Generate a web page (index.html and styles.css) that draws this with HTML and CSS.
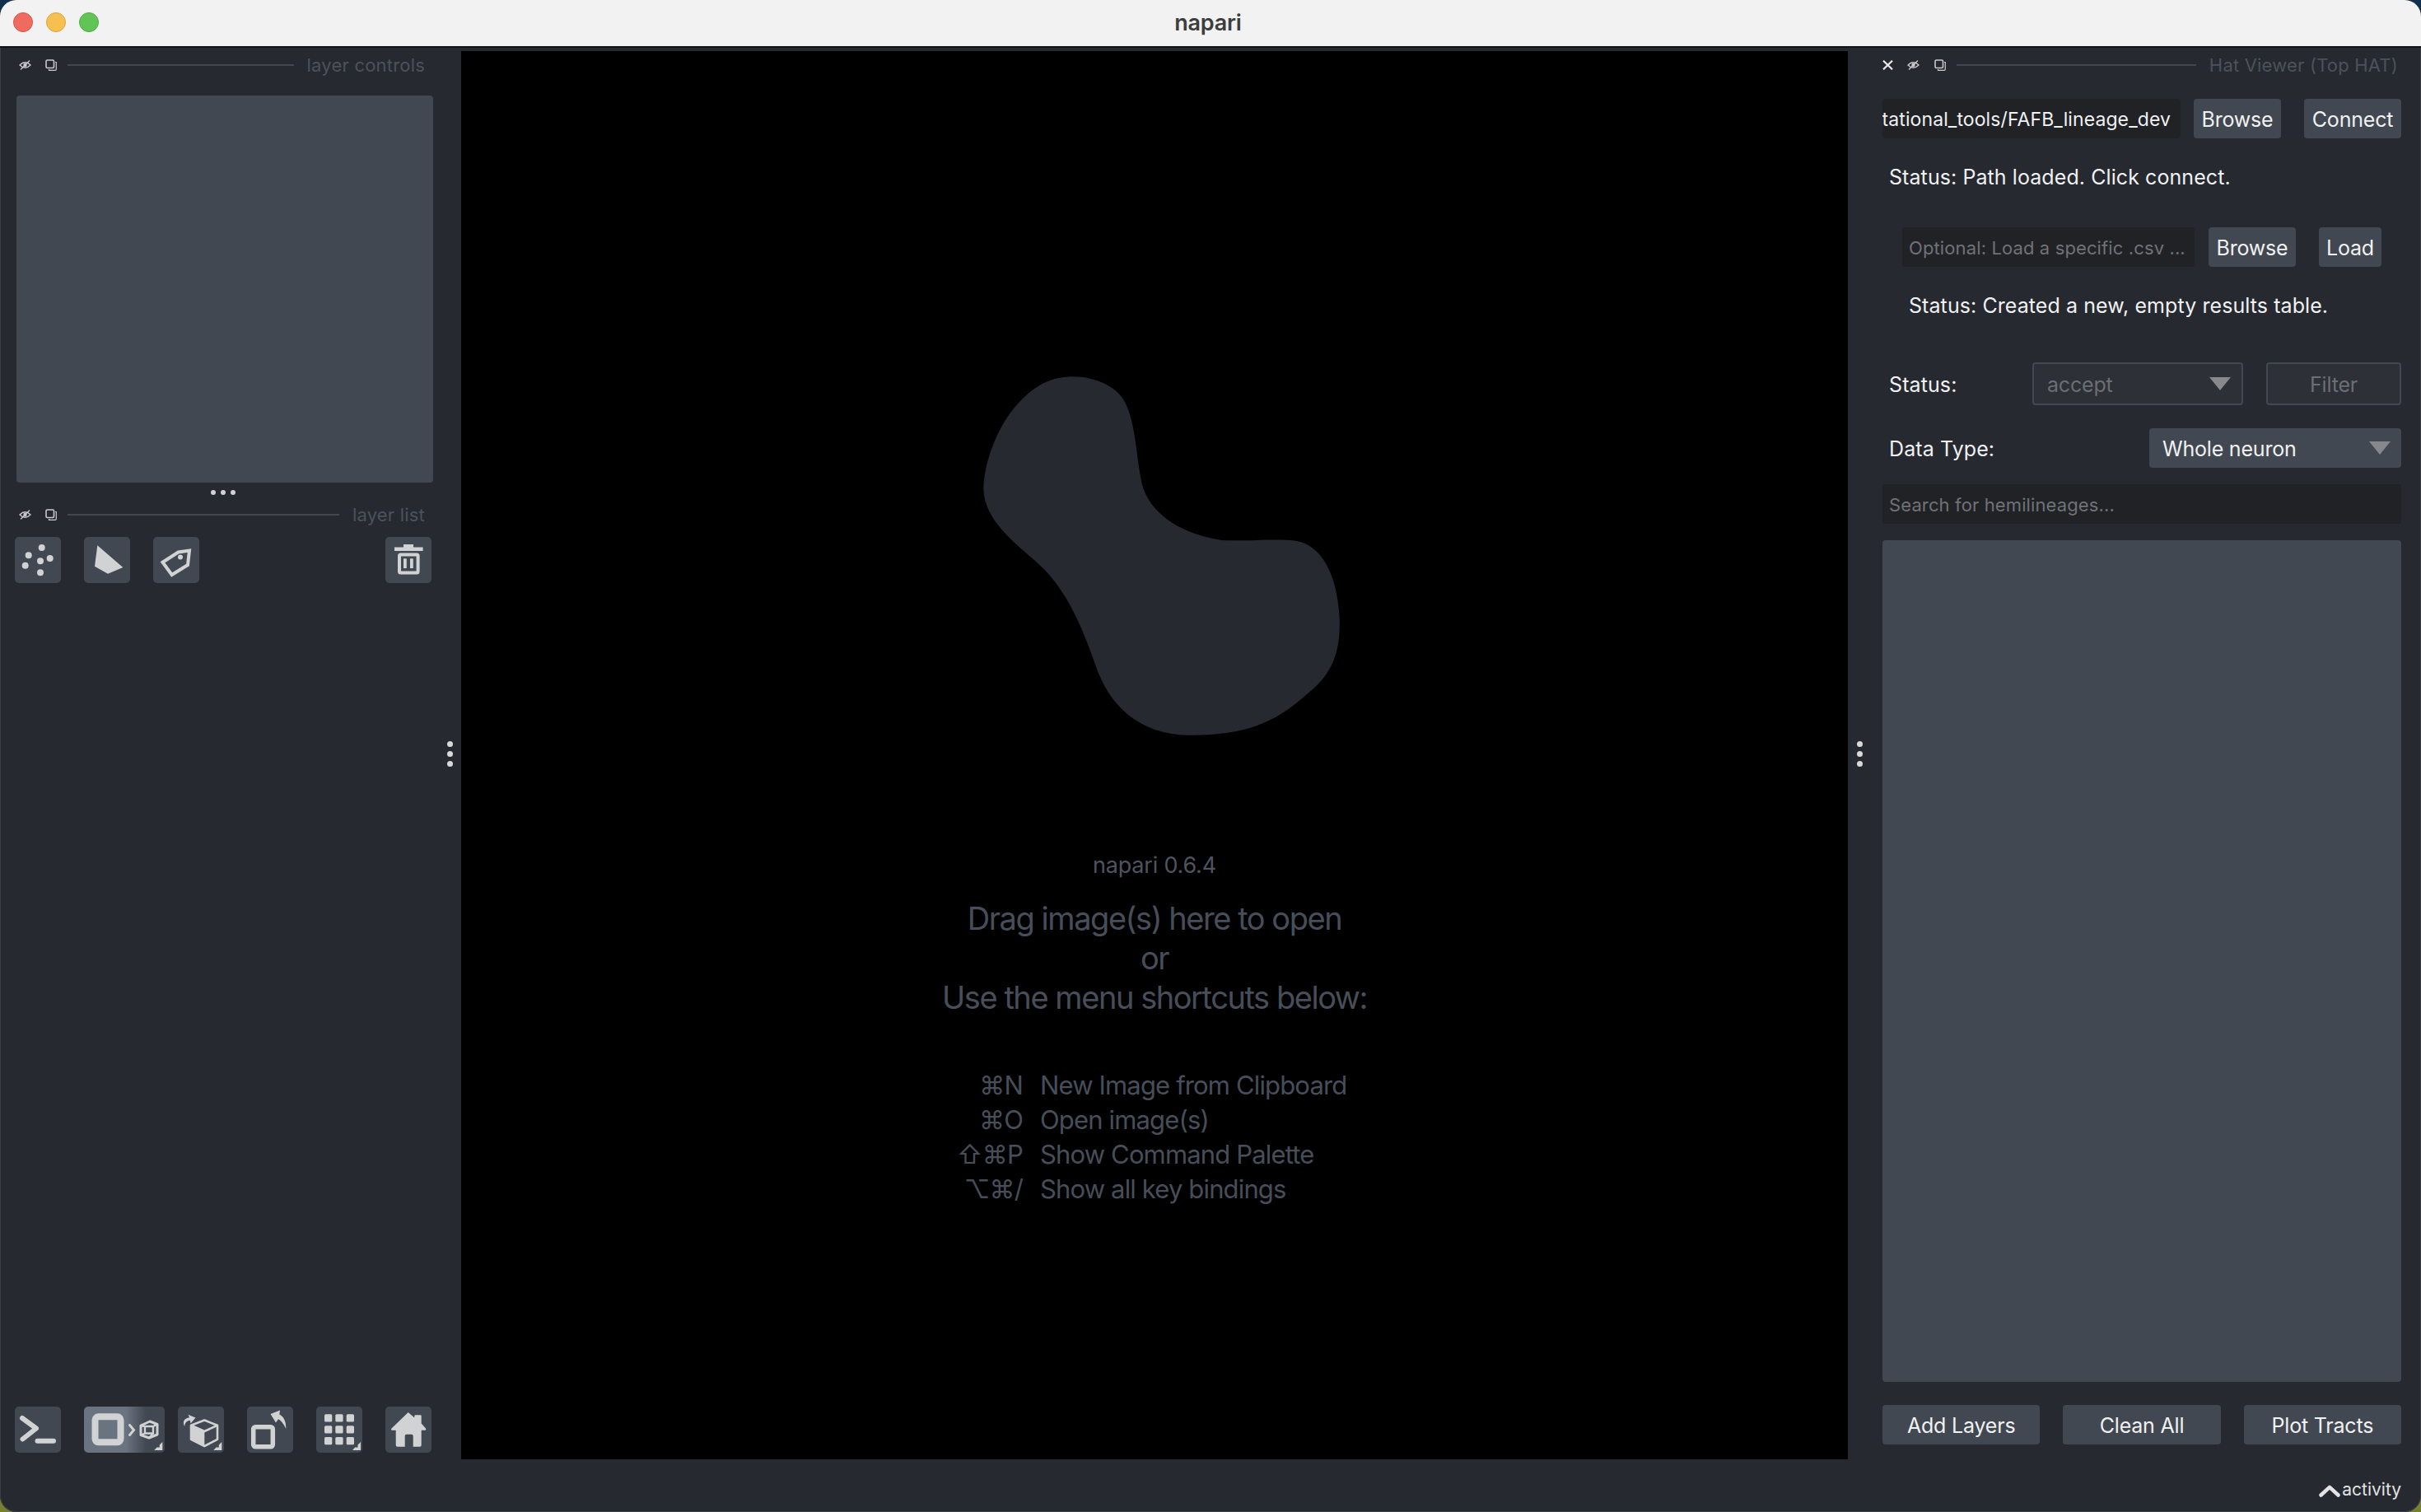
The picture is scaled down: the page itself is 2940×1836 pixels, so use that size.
FILE: index.html

```html
<!DOCTYPE html>
<html lang="en">
<head>
    <meta charset="UTF-8">
    <meta name="viewport" content="width=device-width, initial-scale=1.0">
    <title>napari</title>
    <link rel="stylesheet" href="styles.css">
</head>
<body>

<svg class="icon-defs" width="0" height="0">
    <symbol id="eye" viewBox="0 0 15 12">
        <path d="M1 6 Q7.5 -.5 14 6 Q7.5 12.5 1 6 Z" fill="none" stroke="currentColor" stroke-width="1.3"/>
        <circle cx="7.5" cy="6" r="2.2" fill="currentColor"/>
        <path d="M2 11.5 L13 .5" stroke="currentColor" stroke-width="1.3"/>
    </symbol>
    <symbol id="float" viewBox="0 0 14 14">
        <rect x="1" y="1" width="9.5" height="9.5" rx="1.5" fill="none" stroke="currentColor" stroke-width="1.6"/>
        <path d="M12 3.5 H13.3 V12 a1.3 1.3 0 0 1 -1.3 1.3 H4.5 V12" fill="none" stroke="currentColor" stroke-width="1.2"/>
    </symbol>
</svg>

<div class="window">
    <header class="titlebar">
        <div class="lights">
            <span class="light light-red"></span>
            <span class="light light-yellow"></span>
            <span class="light light-green"></span>
        </div>
        <span class="window-title">napari</span>
    </header>

    <div class="main">
        <!-- Left dock -->
        <aside class="left-dock">
            <div class="dock-title">
                <svg class="eye-icon"><use href="#eye"/></svg>
                <svg class="float-icon"><use href="#float"/></svg>
                <span class="dock-line"></span>
                <span class="dock-name">layer controls</span>
            </div>
            <div class="layer-controls"></div>
            <div class="splitter-dots"><span></span><span></span><span></span></div>
            <div class="dock-title list-title">
                <svg class="eye-icon"><use href="#eye"/></svg>
                <svg class="float-icon"><use href="#float"/></svg>
                <span class="dock-line"></span>
                <span class="dock-name">layer list</span>
            </div>
            <div class="tool-row layer-tools">
                <button class="tool-btn" aria-label="New points layer">
                    <svg viewBox="0 0 56 56">
                        <circle cx="32.7" cy="13" r="4"/><circle cx="16.7" cy="22.3" r="4"/>
                        <circle cx="42.7" cy="26" r="4"/><circle cx="31" cy="29.3" r="4"/>
                        <circle cx="12.7" cy="34.7" r="4"/><circle cx="31" cy="43.3" r="4"/>
                    </svg>
                </button>
                <button class="tool-btn" aria-label="New shapes layer">
                    <svg viewBox="0 0 56 56"><path d="M16.3 10.3 L47.3 37 L29 44.7 L13 35.7 Z"/></svg>
                </button>
                <button class="tool-btn" aria-label="New labels layer">
                    <svg viewBox="0 0 56 56">
                        <path class="line" d="M11.5 30.8 L30.5 18.5 L44 16.5 L42 34 L22.7 46 Z" stroke-width="4"/>
                        <circle cx="33" cy="24.5" r="3"/>
                    </svg>
                </button>
                <button class="tool-btn tool-end" aria-label="Delete layer">
                    <svg viewBox="0 0 56 56">
                        <path d="M22 9 H34 V12.5 H45.6 V17 H11 V12.5 H22 Z"/>
                        <rect class="line" x="17" y="21.5" width="22.6" height="22" rx="1.5" stroke-width="4"/>
                        <rect x="22" y="26.3" width="3.8" height="11.7"/><rect x="30" y="26.3" width="3.8" height="11.7"/>
                    </svg>
                </button>
            </div>
            <div class="dock-spacer"></div>
            <div class="tool-row viewer-tools">
                <button class="tool-btn" aria-label="Toggle console">
                    <svg viewBox="0 0 56 56">
                        <path class="line" d="M9 14 L26 26.5 L9.5 39.5" stroke-width="6" stroke-linecap="round" stroke-linejoin="round"/>
                        <path class="line" d="M27.5 41.7 H47" stroke-width="6" stroke-linecap="round"/>
                    </svg>
                </button>
                <button class="tool-btn tool-wide" aria-label="Toggle 2D/3D">
                    <svg viewBox="0 0 98 56">
                        <rect class="line" x="13.5" y="12.3" width="31" height="31" rx="4" stroke-width="8"/>
                        <path class="line" d="M55.5 22.5 L60.5 28.5 L55.5 34.5" stroke-width="3" stroke-linecap="round"/>
                        <path class="line" d="M80 18 L89 21.5 V34 L79 38 L69 34.5 V23 Z" stroke-width="3" stroke-linejoin="round"/>
                        <path class="line" d="M74 24 H84 V32.5 H74 Z M69 23 L74 24 M89 21.5 L84 24 M79 38 L84 32.5 M69 34.5 L74 32.5" stroke-width="2.4"/>
                        <path d="M95.3 43 V53 H85.3 L88.5 49.5 H91.8 V46.5 Z"/>
                    </svg>
                </button>
                <button class="tool-btn" aria-label="Change camera">
                    <svg viewBox="0 0 56 56">
                        <path d="M8.2 24 C5 18 8 14 14 13.2 L12.5 9.8 L21.5 13.5 L15.5 20.5 L14.8 16.8 C10.5 17.5 8.5 20 8.2 24 Z"/>
                        <path class="line" d="M32.3 16.5 L48 22.8 V39.8 L32.3 48 L16 39.8 V22.8 Z" stroke-width="2.6" stroke-linejoin="round"/>
                        <path d="M15 23 L32.3 30 V48.5 L15 40 Z"/>
                        <path class="line" d="M16 22.8 L32.3 30 L48 22.8" stroke-width="2.6"/>
                        <path d="M53.3 43 V53 H43.3 L46.5 49.5 H49.8 V46.5 Z"/>
                    </svg>
                </button>
                <button class="tool-btn" aria-label="Roll view">
                    <svg viewBox="0 0 56 56">
                        <rect class="line" x="7.7" y="24.7" width="23.6" height="24" rx="2.5" stroke-width="5.5"/>
                        <path d="M28.5 9 L40 4.5 L39.3 9.5 C45 12 47.5 19 47.3 27 C44.5 20.5 41 16.8 38 15.2 L35 19.5 Z"/>
                    </svg>
                </button>
                <button class="tool-btn" aria-label="Toggle grid">
                    <svg viewBox="0 0 56 56">
                        <rect x="10" y="9.3" width="9.3" height="9.3" rx="1.5"/><rect x="23.3" y="9.3" width="9.3" height="9.3" rx="1.5"/><rect x="36.7" y="9.3" width="9.3" height="9.3" rx="1.5"/>
                        <rect x="10" y="23.3" width="9.3" height="9.3" rx="1.5"/><rect x="23.3" y="23.3" width="9.3" height="9.3" rx="1.5"/><rect x="36.7" y="23.3" width="9.3" height="9.3" rx="1.5"/>
                        <rect x="10" y="37" width="9.3" height="9.3" rx="1.5"/><rect x="23.3" y="37" width="9.3" height="9.3" rx="1.5"/><rect x="36.7" y="37" width="9.3" height="9.3" rx="1.5"/>
                        <path d="M54 43 V53 H44 L47.2 49.5 H50.5 V46.5 Z"/>
                    </svg>
                </button>
                <button class="tool-btn" aria-label="Reset view">
                    <svg viewBox="0 0 56 56">
                        <path d="M27.7 7 L35.3 13.5 V11.5 Q35.3 10.3 36.5 10.3 H42.5 Q43.7 10.3 43.7 11.5 V20.5 L49 26.5 Q50 28.7 48 28.7 H43.7 V46.7 Q43.7 48.7 41.7 48.7 H33.7 V35.7 Q33.7 33.7 31.7 33.7 H25.7 Q23.7 33.7 23.7 35.7 V48.7 H14.7 Q12.7 48.7 12.7 46.7 V28.7 H8.5 Q6 28.7 7.5 26.5 Z"/>
                    </svg>
                </button>
            </div>
            <div class="handle"><span></span><span></span><span></span></div>
        </aside>

        <!-- Canvas welcome screen -->
        <main class="canvas">
            <svg class="logo" viewBox="0 0 1500 1440">
                <path d="M450 82 C540 80 630 120 655 190 C690 270 690 390 712 480 C740 570 830 650 1000 678 C1080 682 1200 672 1270 680 C1360 695 1420 790 1430 960 C1435 1090 1400 1170 1310 1240 C1200 1340 1090 1390 880 1388 C700 1385 590 1280 540 1130 C490 990 440 870 350 780 C280 710 135 620 133 490 C135 400 180 270 250 190 C310 120 370 85 450 82 Z"/>
            </svg>
            <div class="version">napari 0.6.4</div>
            <div class="drag-text">Drag image(s) here to open<br>or<br>Use the menu shortcuts below:</div>
            <div class="shortcuts">
                <span class="keys">⌘N</span><span>New Image from Clipboard</span>
                <span class="keys">⌘O</span><span>Open image(s)</span>
                <span class="keys">⇧⌘P</span><span>Show Command Palette</span>
                <span class="keys">⌥⌘/</span><span>Show all key bindings</span>
            </div>
        </main>

        <!-- Hat Viewer dock -->
        <aside class="right-dock">
            <div class="dock-title hat-title">
                <svg class="close-icon" viewBox="0 0 13 12"><path d="M1 .7 L12 11.3 M12 .7 L1 11.3" stroke="currentColor" stroke-width="2.2"/></svg>
                <svg class="eye-icon"><use href="#eye"/></svg>
                <svg class="float-icon"><use href="#float"/></svg>
                <span class="dock-line"></span>
                <span class="dock-name">Hat Viewer (Top HAT)</span>
            </div>

            <div class="path-row">
                <div class="path-input"><span>computational_tools/FAFB_lineage_dev</span></div>
                <button class="btn btn-browse">Browse</button>
                <button class="btn btn-connect">Connect</button>
            </div>
            <div class="status status-path">Status: Path loaded. Click connect.</div>

            <div class="csv-row">
                <input class="text-input csv-input" type="text" placeholder="Optional: Load a specific .csv ...">
                <button class="btn btn-browse">Browse</button>
                <button class="btn btn-load">Load</button>
            </div>
            <div class="status status-csv">Status: Created a new, empty results table.</div>

            <div class="filter-row">
                <label class="field-label status-label">Status:</label>
                <div class="combo combo-off">
                    <select disabled><option>accept</option></select>
                </div>
                <button class="btn btn-off" disabled>Filter</button>
            </div>
            <div class="type-row">
                <label class="field-label">Data Type:</label>
                <div class="combo combo-type">
                    <select><option>Whole neuron</option></select>
                </div>
            </div>

            <input class="text-input search-input" type="text" placeholder="Search for hemilineages...">
            <div class="results-list"></div>

            <div class="action-row">
                <button class="btn">Add Layers</button>
                <button class="btn">Clean All</button>
                <button class="btn">Plot Tracts</button>
            </div>
            <div class="activity">
                <svg viewBox="0 0 26 15"><path d="M2.5 12.5 L13 2.8 L23.5 12.5" fill="none" stroke="currentColor" stroke-width="4.5" stroke-linecap="round" stroke-linejoin="round"/></svg>
                <span>activity</span>
            </div>
            <div class="handle"><span></span><span></span><span></span></div>
        </aside>
    </div>
</div>

</body>
</html>
```

FILE: styles.css

```css
* { box-sizing: border-box; }
html, body { margin: 0; padding: 0; height: 100%; }
body { width: 2940px; height: 1836px; overflow: hidden; background: linear-gradient(#12304d 50%, #77802e 50%); font-family: "Inter", "DejaVu Sans", sans-serif; color: #f0f1f2; }
.icon-defs { display: block; height: 0; }

.window { width: 2940px; height: 1836px; display: flex; flex-direction: column; border-radius: 20px; overflow: hidden; background: #262930; box-shadow: inset 0 0 0 1px #3a3e45; }

/* title bar */
.titlebar { height: 58px; flex: none; display: grid; grid-template-columns: 1fr auto 1fr; align-items: center; padding: 0 0 2px 16px; background: #f2f2f2; border-bottom: 2px solid #111317; }
.lights { display: flex; gap: 16px; }
.light { width: 24px; height: 24px; border-radius: 50%; }
.light-red { background: #ef6a5f; border: 1px solid #d9534a; }
.light-yellow { background: #f6bf4f; border: 1px solid #dea23a; }
.light-green { background: #60c554; border: 1px solid #4dac42; }
.window-title { margin-right: 22px; font-size: 27px; font-weight: 600; color: #3d3d3d; font-family: "Inter", sans-serif; letter-spacing: -0.2px; }

.main { flex: 1; display: flex; min-height: 0; }

/* dock titles */
.dock-title { height: 24px; display: flex; align-items: center; color: #c9cacc; }
.eye-icon { width: 15px; height: 12px; flex: none; }
.float-icon { width: 14px; height: 14px; flex: none; margin-left: 17px; }
.dock-line { flex: 1; height: 2px; margin: 0 16px 0 13px; background: #414851; }
.dock-name { font-size: 22px; line-height: 24px; color: #4c525c; letter-spacing: 0.2px; }

/* left dock */
.left-dock { position: relative; width: 560px; flex: none; display: flex; flex-direction: column; padding: 9px 36px 72px 18px; }
.left-dock .dock-title { padding: 0 8px 0 5px; }
.layer-controls { width: 506px; height: 470px; flex: none; margin: 25px 0 0 2px; background: #414851; border-radius: 4px; }
.splitter-dots { display: flex; justify-content: center; gap: 6px; margin: 9px 0 0 0; height: 6px; }
.splitter-dots span { width: 6px; height: 6px; border-radius: 50%; background: #d1d2d4; }
.list-title { margin-top: 12px; }
.dock-spacer { flex: 1; }

.tool-row { display: flex; gap: 28px; }
.layer-tools { margin-top: 15px; }
.tool-btn { width: 56px; height: 56px; flex: none; padding: 0; border: 0; border-radius: 5px; background: #414851; }
.tool-btn svg { display: block; width: 100%; height: 100%; fill: #d1d2d4; }
.tool-btn .line { fill: none; stroke: #d1d2d4; }
.tool-end { margin-left: auto; }
.tool-wide { width: 98px; margin-right: -12px; background: linear-gradient(90deg, #6a7380 52%, #414851 77%); }

/* splitter handles */
.handle { position: absolute; top: 842px; display: flex; flex-direction: column; gap: 5px; }
.handle span { width: 7px; height: 7px; border-radius: 50%; background: #d8d9db; }
.left-dock .handle { right: 10px; }
.right-dock .handle { left: 11px; }

/* canvas */
.canvas { flex: 1; min-width: 0; margin: 4px 0 64px 0; padding-top: 368px; background: #000; color: #474e59; text-align: center; }
.logo { display: block; width: 500px; height: 480px; margin: 0 auto; position: relative; left: -2px; fill: #262930; }
.version { margin-top: 123px; font-size: 27px; line-height: 36px; color: #4e545f; letter-spacing: -0.2px; }
.drag-text { margin-top: 22px; font-size: 38px; line-height: 48px; letter-spacing: -1.45px; }
.shortcuts { display: grid; grid-template-columns: 682px 1fr; column-gap: 21px; margin-top: 62px; font-size: 31px; line-height: 42px; letter-spacing: -0.85px; text-align: left; }
.keys { text-align: right; }

/* right dock */
.right-dock { position: relative; width: 696px; flex: none; display: flex; flex-direction: column; padding: 9px 24px 15px 42px; }
.hat-title .close-icon { width: 13px; height: 12px; flex: none; margin-right: 17px; color: #e6e7e8; }
.hat-title .dock-name { margin-right: 4px; }
.hat-title .float-icon { margin-left: 18px; }

.btn { height: 48px; padding: 1px 0 0 0; border: 0; border-radius: 4px; background: #414851; color: #f0f1f2; font-family: inherit; font-size: 25px; letter-spacing: -0.2px; }
.btn-browse { width: 106px; flex: none; }
.btn-connect { width: 118px; flex: none; }
.btn-load { width: 76px; flex: none; }
.btn-off { width: 164px; height: 52px; flex: none; background: #2d3037; border: 2px solid #414851; color: #6b6e74; }

.path-row { display: flex; gap: 28px; margin-top: 29px; }
.path-row .btn-browse { margin-left: -12px; }
.path-input { width: 362px; height: 48px; flex: none; display: flex; justify-content: flex-end; align-items: center; overflow: hidden; padding: 1px 12px 0 4px; border-radius: 4px; background: #202226; font-size: 23px; letter-spacing: 0.1px; color: #f0f1f2; white-space: nowrap; }
.path-input span { flex: none; }

.text-input { display: block; height: 48px; padding: 1px 8px 0 8px; border: 0; border-radius: 4px; background: #202226; color: #f0f1f2; font-family: inherit; font-size: 22px; letter-spacing: 0.12px; outline: none; }
.text-input::placeholder { color: #707277; opacity: 1; }

.status { font-size: 25px; line-height: 32px; letter-spacing: 0.08px; }
.status-path { margin-top: 31px; padding-left: 8px; }
.csv-row { display: flex; gap: 28px; margin-top: 45px; padding-left: 24px; }
.csv-row .btn-browse { margin-left: -11px; }
.csv-input { width: 355px; flex: none; }
.status-csv { margin-top: 31px; padding-left: 32px; }

.filter-row { display: flex; align-items: center; gap: 28px; margin-top: 53px; }
.type-row { display: flex; align-items: center; justify-content: space-between; margin-top: 28px; }
.field-label { padding: 1px 0 0 8px; font-size: 25px; letter-spacing: 0.1px; }
.status-label { width: 182px; flex: none; margin-right: -28px; }

.combo { position: relative; }
.combo select { display: block; width: 100%; height: 100%; padding: 1px 0 0 16px; border: 0; border-radius: 4px; background: #414851; color: #f0f1f2; font-family: inherit; font-size: 25px; letter-spacing: -0.2px; appearance: none; outline: none; opacity: 1; }
.combo::after { content: ""; position: absolute; right: 13px; top: 16px; border-left: 13px solid transparent; border-right: 13px solid transparent; border-top: 16px solid #86888c; }
.combo-off { width: 256px; height: 52px; flex: none; }
.combo-off select { background: #2d3037; border: 2px solid #414851; color: #6b6e74; }
.combo-off::after { top: 18px; right: 15px; }
.combo-type { width: 306px; height: 48px; }

.search-input { width: 100%; flex: none; margin-top: 20px; }
.results-list { flex: 1; margin-top: 20px; border-radius: 4px; background: #414851; }

.action-row { display: flex; gap: 28px; margin-top: 28px; }
.action-row .btn { flex: 1; }

.activity { display: flex; align-items: center; justify-content: flex-end; gap: 2px; height: 24px; margin-top: 43px; font-size: 21px; line-height: 24px; color: #e2e3e4; }
.activity svg { width: 26px; height: 15px; flex: none; margin-top: 3px; }
```
